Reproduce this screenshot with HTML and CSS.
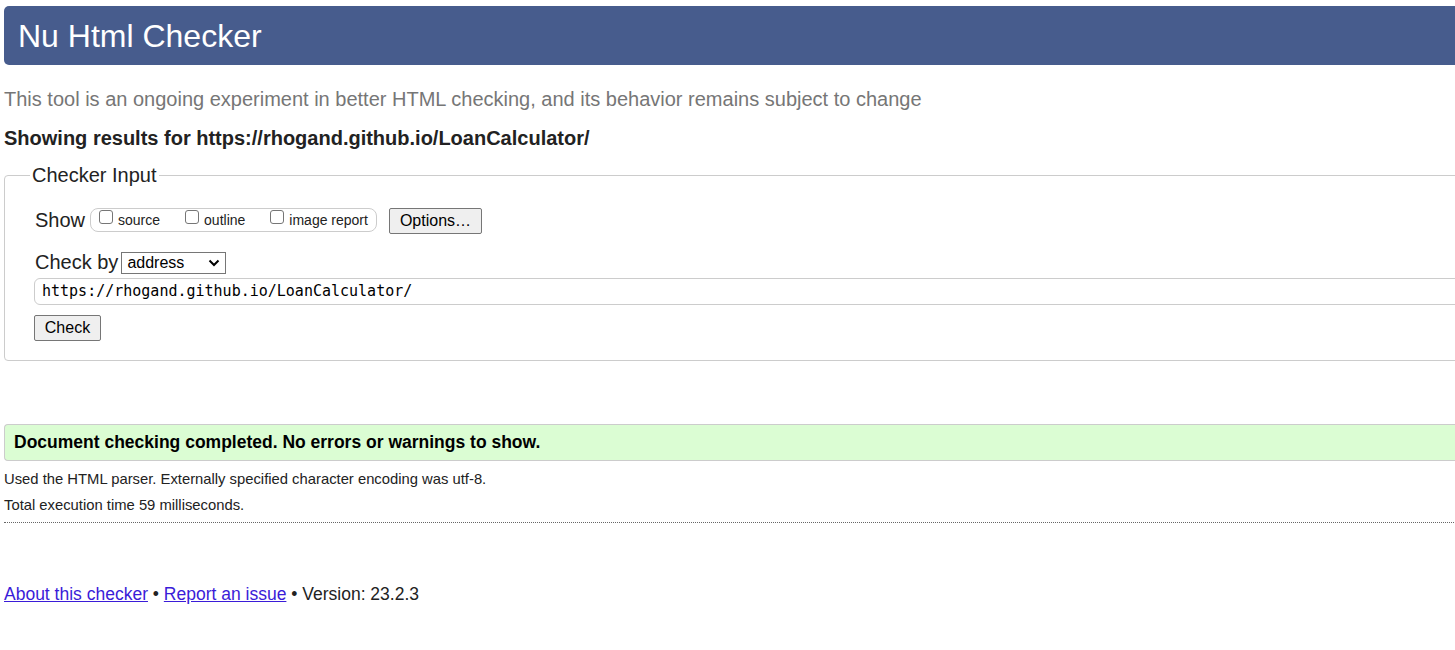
FILE: index.html
```html
<!DOCTYPE html>
<html lang="en">
<head>
<meta charset="utf-8">
<title>Nu Html Checker</title>
<link rel="stylesheet" href="styles.css">
</head>
<body>
<div class="page">
  <h1 class="title">Nu Html Checker</h1>
  <p class="intro">This tool is an ongoing experiment in better HTML checking, and its behavior remains subject to change</p>
  <p class="showing">Showing results for https://rhogand.github.io/LoanCalculator/</p>
  <fieldset class="input-set">
    <legend class="legend">Checker Input</legend>
    <div class="row show-row">
      <span class="label">Show</span>
      <span class="opts">
        <label class="opt"><span class="box"></span>source</label>
        <label class="opt"><span class="box"></span>outline</label>
        <label class="opt"><span class="box"></span>image report</label>
      </span>
      <span class="btn options-btn">Options…</span>
    </div>
    <div class="row by-row">
      <span class="label">Check by</span>
      <span class="select">address<svg class="chev" width="12" height="8" viewBox="0 0 12 8"><path d="M1.5 1.5 L6 6 L10.5 1.5" fill="none" stroke="#000" stroke-width="2"/></svg></span>
    </div>
    <div class="url">https://rhogand.github.io/LoanCalculator/</div>
    <span class="btn check-btn">Check</span>
  </fieldset>
  <p class="success">Document checking completed. No errors or warnings to show.</p>
  <p class="small first">Used the HTML parser. Externally specified character encoding was utf-8.</p>
  <p class="small">Total execution time 59 milliseconds.</p>
  <hr class="dots">
  <p class="footer"><a href="#" class="lnk">About this checker</a> • <a href="#" class="lnk">Report an issue</a> • Version: 23.2.3</p>
</div>
</body>
</html>
```
FILE: styles.css
```css
html, body { margin: 0; padding: 0; overflow: hidden; background: #fff; }
body { font-family: "Liberation Sans", Arial, sans-serif; color: #222; }
.page { width: 1480px; padding: 6px 0 0 4px; }
.title {
  margin: 0; height: 59px; box-sizing: border-box;
  background: #475c8d; color: #fff; font-weight: normal;
  font-size: 32px; line-height: 59px; padding: 1px 0 0 14px;
  border-radius: 5px 0 0 5px;
}
.intro { margin: 22px 0 0; font-size: 20px; line-height: 24px; color: #767676; }
.showing { margin: 15px 0 0; font-size: 20px; line-height: 24px; font-weight: bold; }
.input-set {
  margin: 14px 0 0; border: 1px solid #ccc; border-radius: 4px;
  padding: 10px 0 19px 29px;
}
.legend { font-size: 20px; padding: 0 2px; margin-left: -4px; color: #222; }
.row { display: flex; align-items: center; }
.show-row { margin-top: 10px; }
.label { font-size: 20px; padding-left: 1px; }
.opts {
  display: flex; align-items: center; margin-left: 5px;
  border: 1px solid #ccc; border-radius: 8px; height: 24px; box-sizing: border-box;
  padding: 0 8px 0 8px;
}
.opt { display: flex; align-items: center; font-size: 14px; margin-right: 25px; }
.opt:last-child { margin-right: 0; }
.box {
  width: 14px; height: 14px; box-sizing: border-box; border: 1px solid #767676;
  border-radius: 3px; margin-right: 5px; position: relative; top: -3px; background: #fff;
}
.btn {
  display: inline-block; font-size: 16px; border: 1px solid #767676; border-radius: 2px;
  background: #efefef; color: #000; box-sizing: border-box; height: 26px; line-height: 24px;
}
.options-btn { margin-left: 12px; padding: 0 10px; width: 93px; position: relative; top: 1px; }
.by-row { margin-top: 18px; }
.select {
  display: inline-flex; align-items: center; justify-content: space-between;
  margin-left: 3px; width: 105px; height: 22px; box-sizing: border-box;
  border: 1px solid #767676; font-size: 16px; padding: 0 5px 0 5px; color: #000;
}
.url {
  margin-top: 4px; height: 27px; box-sizing: border-box; border: 1px solid #ccc;
  border-radius: 6px; font-family: "DejaVu Sans Mono", "Liberation Mono", monospace;
  font-size: 15px; line-height: 25px; padding-left: 7px; color: #000;
}
.check-btn { margin-top: 10px; width: 67px; text-align: center; }
.success {
  margin: 63px 0 0; background: #dbfdd3; border: 1px solid #ccc; border-right: 0;
  border-radius: 4px 0 0 4px; height: 37px; box-sizing: border-box;
  font-weight: bold; font-size: 17.5px; line-height: 34px; padding-left: 9px; color: #000;
}
.small { margin: 0; font-size: 14.8px; line-height: 26px; color: #222; }
.small.first { margin-top: 5px; }
.dots { margin: 4px 0 0; border: 0; border-top: 1px dotted #666; height: 0; }
.footer { margin: 59px 0 0; font-size: 17.5px; line-height: 24px; color: #222; }
.lnk { color: #3a1cd8; }
```
